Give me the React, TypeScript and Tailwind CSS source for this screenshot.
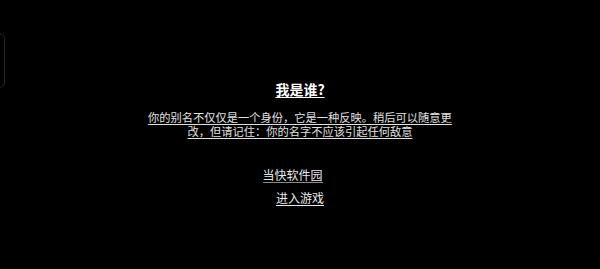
import { useState } from "react";

export default function App() {
  const [name, setName] = useState("当快软件园");

  return (
    <div
      className="relative w-[600px] h-[269px] bg-black overflow-hidden flex flex-col items-center pt-[81px] text-white"
      style={{ fontFamily: '"Noto Sans CJK SC", "Noto Sans", sans-serif' }}
    >
      <div className="absolute left-[-7px] top-[33px] w-[12px] h-[55px] rounded-[6px] border border-[#262626]" />

      <h1 className="text-[14px] leading-[16px] font-bold underline underline-offset-2">我是谁?</h1>

      <p className="mt-[13px] w-[310px] text-center text-[11.25px] leading-[14px] text-[#e0e0e0] underline underline-offset-2">
        你的别名不仅仅是一个身份，它是一种反映。稍后可以随意更改，但请记住：你的名字不应该引起任何敌意
      </p>

      <input
        value={name}
        onChange={(e) => setName(e.target.value)}
        className="mt-[28px] mr-[15px] w-[60px] h-[17px] bg-transparent text-[12px] leading-[14px] text-[#e8e8e8] border-b border-[#8a8a8a] outline-none p-0"
      />

      <button
        type="button"
        className="mt-[8px] text-[12px] leading-[14px] text-[#e8e8e8] underline underline-offset-2"
      >
        进入游戏
      </button>
    </div>
  );
}
